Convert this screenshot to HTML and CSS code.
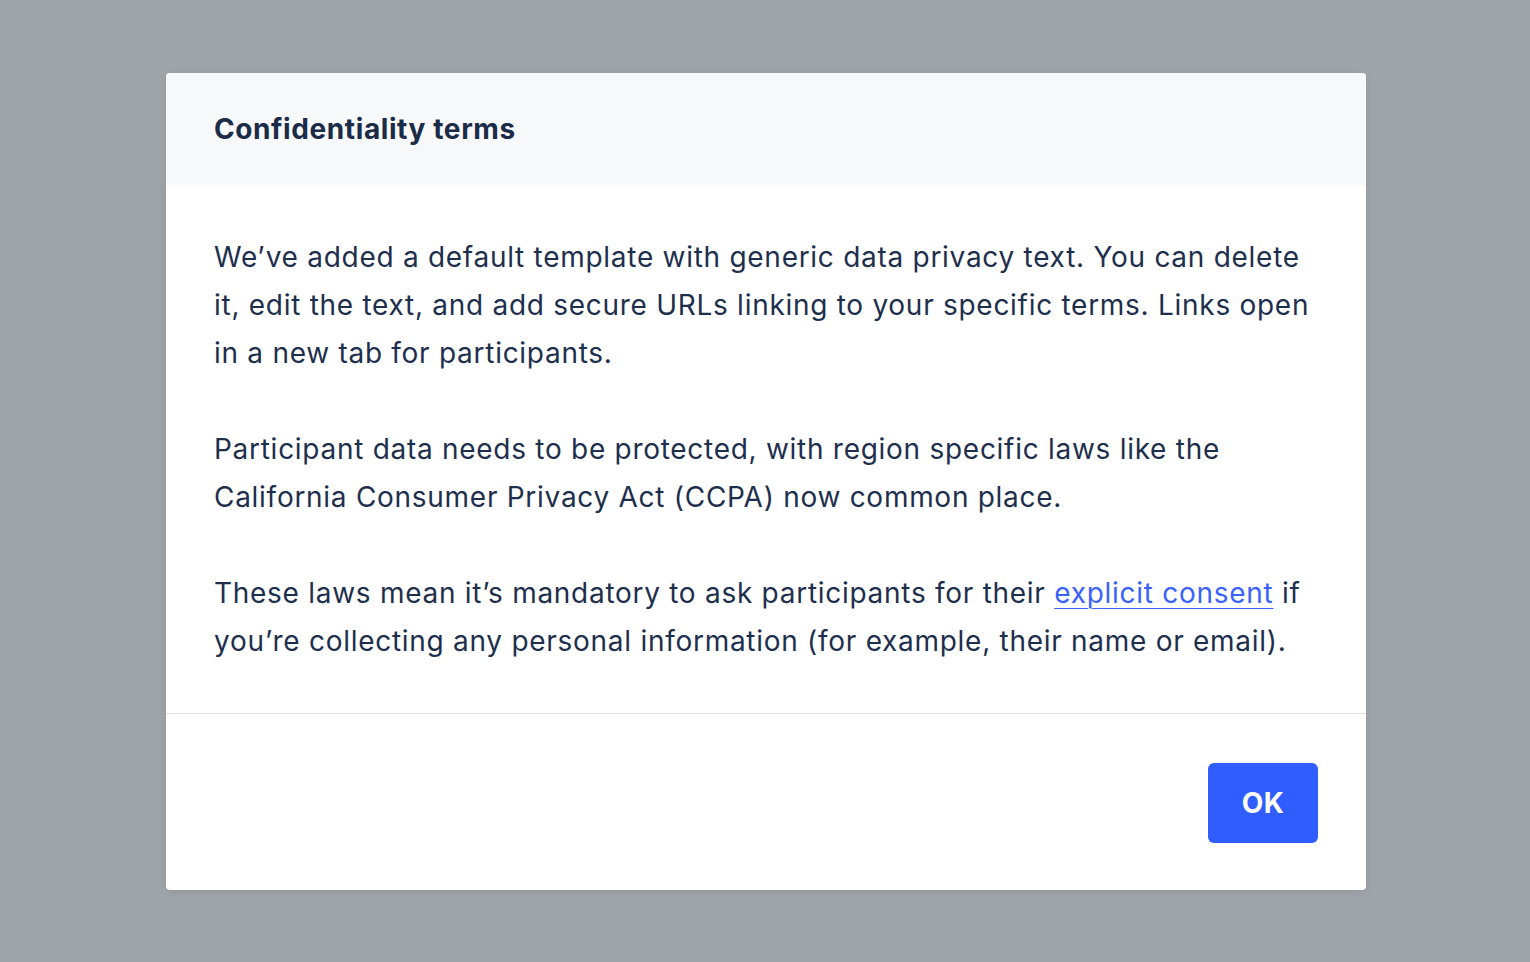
FILE: index.html
```html
<!DOCTYPE html>
<html>
<head>
<meta charset="utf-8">
<link rel="stylesheet" href="styles.css">
</head>
<body>
<div class="overlay">
  <div class="modal">
    <div class="modal-header">
      <h2 class="modal-title">Confidentiality terms</h2>
    </div>
    <div class="modal-body">
      <p>We’ve added a default template with generic data privacy text. You can delete it, edit the text, and add secure URLs linking to your specific terms. Links open in a new tab for participants.</p>
      <p>Participant data needs to be protected, with region specific laws like the California Consumer Privacy Act (CCPA) now common place.</p>
      <p>These laws mean it’s mandatory to ask participants for their <a href="#" class="link">explicit consent</a> if you’re collecting any personal information (for example, their name or email).</p>
    </div>
    <div class="modal-footer">
      <button class="btn-primary">OK</button>
    </div>
  </div>
</div>
</body>
</html>
```

FILE: styles.css
```css
html, body {
  margin: 0;
  padding: 0;
  height: 100%;
}
body {
  background: #9fa4a9;
  font-family: "Inter", "Noto Sans", sans-serif;
  color: #1e2f4d;
}
.overlay {
  padding: 73px 0 0 2px;
  display: flex;
  justify-content: center;
}
.modal {
  width: 1200px;
  background: #ffffff;
  border-radius: 4px;
  overflow: hidden;
  box-shadow: 0 2px 8px rgba(0,0,0,0.08);
}
.modal-header {
  background: #f7f8fa;
  height: 112px;
  padding: 0 48px;
  display: flex;
  align-items: center;
}
.modal-title {
  margin: 0;
  font-size: 28px;
  font-weight: 700;
  letter-spacing: 0.6px;
  color: #1a2c48;
}
.modal-body {
  padding: 48px;
  border-bottom: 1px solid #dde1e5;
}
.modal-body p {
  margin: 0 0 48px;
  font-size: 28px;
  line-height: 48px;
  letter-spacing: 0.72px;
}
.modal-body p:last-child {
  margin-bottom: 0;
}
.link {
  color: #3a62ff;
  text-decoration: underline;
  text-decoration-thickness: 1px;
  text-underline-offset: 5px;
}
.modal-footer {
  padding: 49px 48px 47px;
  display: flex;
  justify-content: flex-end;
}
.btn-primary {
  width: 110px;
  height: 80px;
  border: none;
  border-radius: 6px;
  background: #305dff;
  color: #ffffff;
  font-family: inherit;
  font-size: 28px;
  font-weight: 700;
  letter-spacing: 0.5px;
}
```
